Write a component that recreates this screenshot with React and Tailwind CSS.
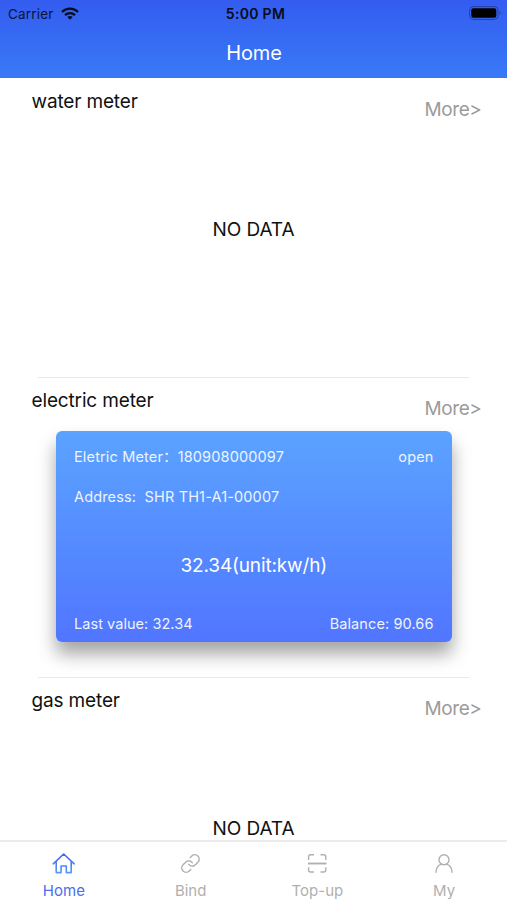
import React, { useState } from 'react';
import { Link } from 'lucide-react';

const HomeIcon = () => (
  <svg width="24" height="24" viewBox="0 0 24 24" fill="none" strokeWidth="1.6" strokeLinejoin="round" strokeLinecap="round">
    <defs>
      <linearGradient id="homeStroke" x1="0" y1="0" x2="0" y2="24" gradientUnits="userSpaceOnUse">
        <stop offset="0.2" stopColor="#4a63ee" />
        <stop offset="1" stopColor="#55a2fb" />
      </linearGradient>
    </defs>
    <path stroke="url(#homeStroke)" d="M2.2 12.8 12.700 3l10.500 9.800M5.200 10.300v11.300h4.900v-6.600h5.200v6.600h4.900V10.300" />
  </svg>
);

const LinkIcon = () => (
  <span className="flex h-6 w-6 items-center justify-center">
    <Link size={21} strokeWidth={1.7} />
  </span>
);

const ScanIcon = () => (
  <svg width="24" height="24" viewBox="0 0 24 24" fill="none" stroke="currentColor" strokeWidth="1.400">
    <path d="M3.600 9V5.800q0-2 2-2H9M15.500 3.800h3.300q2 0 2 2V9M3.600 16.200V19q0 2 2 2H9M15.500 21h3.300q2 0 2-2v-2.800" />
    <path strokeWidth="1.900" d="M3 12.500h18.500" />
  </svg>
);

const UserIcon = () => (
  <svg width="24" height="24" viewBox="0 0 24 24" fill="none" stroke="currentColor" strokeWidth="1.400" strokeLinecap="round">
    <circle cx="12" cy="8.800" r="5" />
    <path d="M4 21.300c0-4 2.300-7.200 5.500-8.200M20 21.300c0-4-2.300-7.200-5.500-8.200" />
  </svg>
);

const tabs = [
  { name: 'Home', Icon: HomeIcon },
  { name: 'Bind', Icon: LinkIcon },
  { name: 'Top-up', Icon: ScanIcon },
  { name: 'My', Icon: UserIcon },
];

const StatusBar = () => (
  <div className="grid h-7 grid-cols-3 items-center pl-2 pr-[5px] text-[13.5px] text-[#0b1538]">
    <div className="flex items-center gap-[7px] tracking-[0.2px]">
      Carrier
      <svg className="-mt-0.5" width="18" height="13" viewBox="0 0 18 13" fill="none" stroke="#060b20" strokeWidth="2.300">
        <path d="M1 5c4.500-4.400 11.500-4.400 16 0" />
        <path d="M4 8.200c2.900-2.800 7.100-2.800 10 0" />
        <path fill="#060b20" stroke="none" d="M9 12.800 6.300 10c1.500-1.400 3.900-1.400 5.400 0z" />
      </svg>
    </div>
    <div className="-mt-0.5 pl-px text-center text-[14px] font-semibold tracking-[0.3px] text-[#060b20]">5:00 PM</div>
    <svg className="-mt-0.5 justify-self-end" width="33" height="14" viewBox="0 0 33 14">
      <rect x="0.600" y="0.600" width="28.500" height="12.800" rx="3.500" fill="none" stroke="#2340a8" />
      <rect x="2.300" y="2.200" width="25" height="9.600" rx="2" fill="#000" />
      <path d="M30.500 5v4c1.500-.6 1.500-3.400 0-4z" fill="#2340a8" />
    </svg>
  </div>
);

const Section = ({ title, children }) => (
  <section className="h-[299.5px] shrink-0">
    <div className="flex h-[53px] items-start justify-between pl-[31.5px] pr-[25.5px] pt-[11.6px]">
      <h2 className="text-[19px] leading-6 tracking-[-0.15px] text-[#111]">{title}</h2>
      <button className="mt-2 text-[19px] leading-6 tracking-[-0.4px] text-[#9b9b9b]">More&gt;</button>
    </div>
    <div className="h-[246px]">{children}</div>
    <div className="mx-[38px] h-px bg-[#e9e9e9]" />
  </section>
);

const NoData = () => (
  <div className="flex h-[198px] items-center justify-center text-[19px] tracking-[-0.1px] text-[#111]">NO DATA</div>
);

const MeterCard = ({ meter }) => (
  <div className="mx-auto flex h-[211px] w-[396px] flex-col rounded-[6px] bg-linear-to-b from-[#5ba3ff] to-[#5175ff] pl-[18.5px] pr-[18px] text-[14.5px] leading-5 tracking-[0.15px] text-[#eef3ff] shadow-[0_12px_18px_rgba(0,0,0,0.36)]">
    <div className="mt-4 flex justify-between">
      <span className="whitespace-pre">Eletric Meter：{meter.number}</span>
      <span>{meter.status}</span>
    </div>
    <div className="mt-5 whitespace-pre">Address:  {meter.address}</div>
    <div className="mt-[47px] text-center text-[19px] leading-6 tracking-[-0.15px] text-white">{meter.value}(unit:kw/h)</div>
    <div className="mt-9 flex justify-between">
      <span className="tracking-[0.05px]">Last value: {meter.value}</span>
      <span className="tracking-[0.1px]">Balance: {meter.balance}</span>
    </div>
  </div>
);

const electricMeter = {
  number: '180908000097',
  status: 'open',
  address: 'SHR TH1-A1-00007',
  value: '32.34',
  balance: '90.66',
};

const App = () => {
  const [activeTab, setActiveTab] = useState('Home');

  return (
    <div className="flex h-[900px] w-[507px] flex-col overflow-hidden bg-white font-['Inter','Noto_Sans_CJK_SC',sans-serif]">
      <header className="h-[78px] shrink-0 bg-linear-to-b from-[#345cf0] to-[#3979f6]">
        <StatusBar />
        <h1 className="pt-[13px] pl-px text-center text-[20px] leading-6 tracking-[-0.1px] text-white">Home</h1>
      </header>

      <main className="flex min-h-0 flex-1 flex-col overflow-hidden">
        <Section title="water meter">
          <NoData />
        </Section>
        <Section title="electric meter">
          <MeterCard meter={electricMeter} />
        </Section>
        <Section title="gas meter">
          <NoData />
        </Section>
      </main>

      <nav className="grid h-[60px] shrink-0 grid-cols-4 border-t-2 border-[#ebebeb] bg-white">
        {tabs.map(({ name, Icon }) => (
          <button
            key={name}
            onClick={() => setActiveTab(name)}
            className={`flex flex-col items-center pt-[9px] ${
              activeTab === name ? 'text-[#4c6ee8]' : 'text-[#b0b0b0]'
            }`}
          >
            <Icon />
            <span className="mt-1.5 pl-px text-[15px] leading-5">{name}</span>
          </button>
        ))}
      </nav>
    </div>
  );
};

export default App;
